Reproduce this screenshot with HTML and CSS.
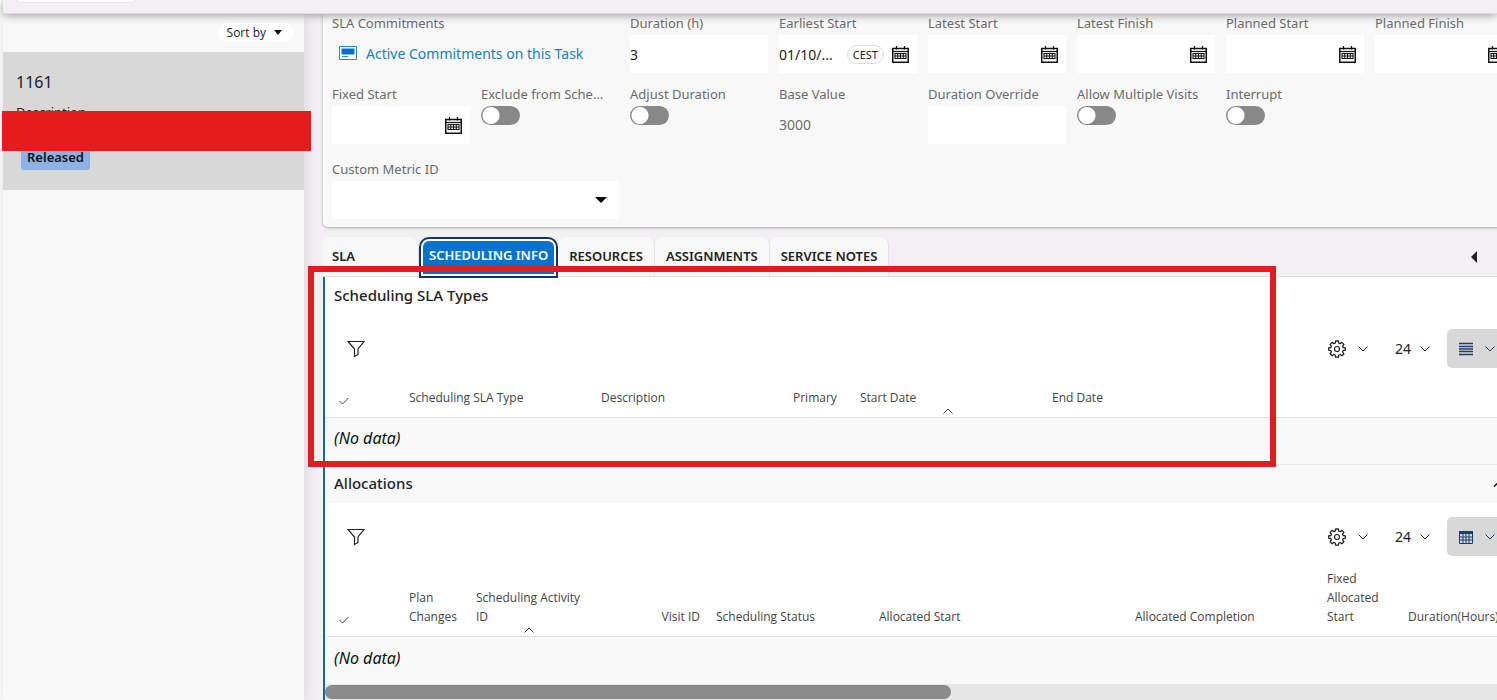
FILE: index.html
```html
<!DOCTYPE html>
<html lang="en">

<head>
  <meta charset="UTF-8" />
  <meta name="viewport" content="width=device-width, initial-scale=1" />
  <title>Task 1161</title>
  <link rel="stylesheet" href="styles.css">
</head>

<body>

  <!-- Shared icons -->
  <svg class="sprite" aria-hidden="true">
    <symbol id="i-calendar" viewBox="0 0 17 17">
      <path d="M.75 2.5h15.5v13.75H.75z" fill="#fff" stroke="#111" stroke-width="1.5" />
      <path d="M1 5.5h15" stroke="#111" stroke-width="1.2" />
      <path d="M4.5 0v3.5M12.500 0v3.500" stroke="#111" stroke-width="1.3" />
      <path d="M3 7.500h11v5H3zM3 10h11M5.750 7.500v5M8.500 7.500v5M11.250 7.500v5" fill="none" stroke="#111" stroke-width="1.1" />
    </symbol>
    <symbol id="i-filter" viewBox="0 0 18 18">
      <path d="M1 1.500h16l-6 7.500v5.500l-3.500 2V9z" fill="none" stroke="#222" stroke-width="1.2" />
    </symbol>
    <symbol id="i-check" viewBox="0 0 10 8">
      <path d="M.5 4l3 3 6-6" fill="none" stroke="#444" />
    </symbol>
    <symbol id="i-down" viewBox="0 0 10 6">
      <path d="M.5.5L5 5 9.500.5" fill="none" stroke="currentColor" />
    </symbol>
    <symbol id="i-up" viewBox="0 0 10 6">
      <path d="M.5 5.500L5 1l4.500 4.500" fill="none" stroke="currentColor" />
    </symbol>
    <symbol id="i-gear" viewBox="0 0 18 18">
      <path d="M7.600 1h2.800l.4 2.200 1.300.5 1.800-1.300 2 2-1.300 1.800.5 1.300 2.200.4v2.200l-2.200.6-.5 1.200 1.300 1.900-2 2-1.800-1.300-1.300.5-.4 2.200H7.600l-.4-2.200-1.300-.5-1.800 1.300-2-2 1.300-1.900-.5-1.200-2.200-.6V7.900l2.200-.4.5-1.300-1.300-1.800 2-2 1.800 1.300 1.300-.5z" fill="none" stroke="#222" stroke-width="1.300" stroke-linejoin="round" />
      <circle cx="9" cy="9" r="2.500" fill="none" stroke="#222" stroke-width="1.200" />
    </symbol>
  </svg>

  <header class="topbar">
    <div class="topbar-box"></div>
  </header>

  <div class="layout">
    <aside class="sidebar">
      <div class="sort">
        <button class="sort-btn" type="button">Sort by
          <svg width="8" height="5" viewBox="0 0 8 5"><path d="M0 0h8L4 5z" fill="#111" /></svg>
        </button>
      </div>
      <div class="card">
        <h2>1161</h2>
        <p>Description</p>
        <span class="status">Released</span>
      </div>
    </aside>

    <main class="content">
      <section class="panel">
        <div class="field span-2">
          <span class="label">SLA Commitments</span>
          <a class="commit-link" href="#">
            <svg width="18" height="14" viewBox="0 0 18 14">
              <path d="M.5.5h17v13H.5z" fill="#fff" stroke="#2a86c8" />
              <path d="M2.500 2.500h13v6h-13z" fill="#0a6ed1" />
              <path d="M3 10.500h6" stroke="#2a86c8" />
            </svg>
            Active Commitments on this Task
          </a>
        </div>
        <div class="field">
          <label for="duration">Duration (h)</label>
          <div class="box"><input id="duration" type="text" value="3" /></div>
        </div>
        <div class="field">
          <label for="earliestStart">Earliest Start</label>
          <div class="box">
            <input id="earliestStart" type="text" value="01/10/..." />
            <span class="zone">CEST</span>
            <svg class="cal"><use href="#i-calendar" /></svg>
          </div>
        </div>
        <div class="field">
          <label for="latestStart">Latest Start</label>
          <div class="box"><input id="latestStart" type="text" /><svg class="cal"><use href="#i-calendar" /></svg></div>
        </div>
        <div class="field">
          <label for="latestFinish">Latest Finish</label>
          <div class="box"><input id="latestFinish" type="text" /><svg class="cal"><use href="#i-calendar" /></svg></div>
        </div>
        <div class="field">
          <label for="plannedStart">Planned Start</label>
          <div class="box"><input id="plannedStart" type="text" /><svg class="cal"><use href="#i-calendar" /></svg></div>
        </div>
        <div class="field">
          <label for="plannedFinish">Planned Finish</label>
          <div class="box"><input id="plannedFinish" type="text" /><svg class="cal"><use href="#i-calendar" /></svg></div>
        </div>

        <div class="field">
          <label for="fixedStart">Fixed Start</label>
          <div class="box"><input id="fixedStart" type="text" /><svg class="cal"><use href="#i-calendar" /></svg></div>
        </div>
        <div class="field">
          <label for="exclude">Exclude from Sche...</label>
          <input id="exclude" class="toggle" type="checkbox" />
        </div>
        <div class="field">
          <label for="adjust">Adjust Duration</label>
          <input id="adjust" class="toggle" type="checkbox" />
        </div>
        <div class="field">
          <span class="label">Base Value</span>
          <div class="readonly">3000</div>
        </div>
        <div class="field">
          <label for="override">Duration Override</label>
          <div class="box"><input id="override" type="text" /></div>
        </div>
        <div class="field">
          <label for="visits">Allow Multiple Visits</label>
          <input id="visits" class="toggle" type="checkbox" />
        </div>
        <div class="field">
          <label for="interrupt">Interrupt</label>
          <input id="interrupt" class="toggle" type="checkbox" />
        </div>

        <div class="field span-2 metric">
          <label for="metric">Custom Metric ID</label>
          <div class="box">
            <select id="metric"><option></option></select>
            <svg class="caret" width="12" height="6" viewBox="0 0 12 6"><path d="M0 0h12L6 6z" /></svg>
          </div>
        </div>
      </section>

      <nav class="tabs">
        <button class="tab tab-sla" type="button">SLA</button>
        <button class="tab active" type="button">SCHEDULING INFO</button>
        <button class="tab" type="button">RESOURCES</button>
        <button class="tab" type="button">ASSIGNMENTS</button>
        <button class="tab" type="button">SERVICE NOTES</button>
        <button class="tab-prev" type="button" aria-label="Previous tabs">
          <svg width="6" height="12" viewBox="0 0 6 12"><path d="M6 0v12L0 6z" fill="#222" /></svg>
        </button>
      </nav>

      <div class="pane">
        <section>
          <div class="title"><h3>Scheduling SLA Types</h3></div>
          <div class="toolbar">
            <button class="tool filter" type="button" aria-label="Filter"><svg width="18" height="18"><use href="#i-filter" /></svg></button>
            <button class="tool" type="button" aria-label="Settings">
              <svg width="18" height="18"><use href="#i-gear" /></svg>
              <svg width="10" height="6"><use href="#i-down" /></svg>
            </button>
            <button class="tool count" type="button">24 <svg width="10" height="6"><use href="#i-down" /></svg></button>
            <button class="tool view" type="button" aria-label="List view">
              <svg width="14" height="14" viewBox="0 0 14 14"><path d="M0 1.500h14M0 4.500h14M0 7h14M0 9.500h14M0 12.500h14" stroke="#1c3c74" stroke-width="1.300" /></svg>
              <svg width="10" height="6"><use href="#i-down" /></svg>
            </button>
          </div>
          <table>
            <colgroup>
              <col class="w-check"><col class="w-192"><col class="w-192"><col class="w-67"><col class="w-192"><col>
            </colgroup>
            <thead>
              <tr>
                <th class="check"><svg width="10" height="8"><use href="#i-check" /></svg></th>
                <th>Scheduling SLA Type</th>
                <th>Description</th>
                <th>Primary</th>
                <th class="sorted">Start Date<svg width="10" height="6"><use href="#i-up" /></svg></th>
                <th>End Date</th>
              </tr>
            </thead>
            <tbody>
              <tr><td colspan="6">(No data)</td></tr>
            </tbody>
          </table>
        </section>

        <section>
          <div class="title shaded">
            <h3>Allocations</h3>
            <svg width="14" height="7" viewBox="0 0 14 7"><path d="M1 6.500L7 1l6 5.500" fill="none" stroke="#111" stroke-width="1.500" /></svg>
          </div>
          <div class="toolbar">
            <button class="tool filter" type="button" aria-label="Filter"><svg width="18" height="18"><use href="#i-filter" /></svg></button>
            <button class="tool" type="button" aria-label="Settings">
              <svg width="18" height="18"><use href="#i-gear" /></svg>
              <svg width="10" height="6"><use href="#i-down" /></svg>
            </button>
            <button class="tool count" type="button">24 <svg width="10" height="6"><use href="#i-down" /></svg></button>
            <button class="tool view" type="button" aria-label="Table view">
              <svg width="14" height="14" viewBox="0 0 14 14"><path d="M.5 1.500h13v12H.5zM.5 7h13M.5 10h13M4 3v10.500M7 3v10.500M10 3v10.500" fill="none" stroke="#1c3c74" /><path d="M0 1h14v3H0z" fill="#1c3c74" /></svg>
              <svg width="10" height="6"><use href="#i-down" /></svg>
            </button>
          </div>
          <table>
            <colgroup>
              <col class="w-check"><col class="w-67"><col class="w-activity"><col class="w-visit"><col class="w-status"><col class="w-start"><col class="w-192"><col class="w-fixed"><col>
            </colgroup>
            <thead>
              <tr>
                <th class="check"><svg width="10" height="8"><use href="#i-check" /></svg></th>
                <th>Plan Changes</th>
                <th class="sorted">Scheduling Activity ID<svg width="10" height="6"><use href="#i-up" /></svg></th>
                <th class="right">Visit ID</th>
                <th>Scheduling Status</th>
                <th>Allocated Start</th>
                <th>Allocated Completion</th>
                <th>Fixed Allocated Start</th>
                <th>Duration(Hours)</th>
              </tr>
            </thead>
            <tbody>
              <tr><td colspan="9">(No data)</td></tr>
            </tbody>
          </table>
          <div class="scroll"><div class="thumb"></div></div>
        </section>
      </div>
    </main>
  </div>

  <!-- Highlights drawn over the page -->
  <div class="mark-bar"></div>
  <div class="mark-frame"></div>

</body>

</html>
```
FILE: styles.css
```css
* {
  box-sizing: border-box;
}

body {
  margin: 0;
  padding-left: 3px;
  height: 100vh;
  overflow: hidden;
  position: relative;
  display: flex;
  flex-direction: column;
  background-color: #fff;
  color: #222;
  font-family: "Noto Sans", "Open Sans", sans-serif;
  font-size: 13px;
  line-height: 19px;
}

h2,
h3,
p {
  margin: 0;
}

button,
input,
select {
  font: inherit;
  color: inherit;
  border: none;
  background: none;
  padding: 0;
  margin: 0;
}

svg {
  display: block;
  flex: none;
}

.sprite {
  position: absolute;
  width: 0;
  height: 0;
}

.topbar {
  flex: none;
  height: 14px;
  padding-left: 14px;
  background-color: #f2f0f3;
  border-bottom: 1px solid #dcdadd;
  box-shadow: 0 1px 10px rgba(0, 0, 0, 0.4);
  position: relative;
  z-index: 1;
}

.topbar-box {
  width: 118px;
  height: 3px;
  background-color: #fff;
  border: 1px solid #e6e4e7;
  border-top: none;
  border-radius: 0 0 4px 4px;
}

.layout {
  flex: 1;
  display: flex;
  min-height: 0;
  background-color: #f2f0f3;
}

/* Sidebar */
.sidebar {
  flex: none;
  width: 301px;
  background-color: #f8f8f8;
  box-shadow: 0 4px 14px rgba(0, 0, 0, 0.13);
}

.sort {
  display: flex;
  justify-content: flex-end;
  padding: 9px 10px 10px;
}

.sort-btn {
  display: flex;
  align-items: center;
  gap: 8px;
  padding: 0 12px 0 9px;
  border-radius: 10px;
  background-color: #fff;
  font-family: "Open Sans", sans-serif;
  font-size: 12px;
}

.card {
  height: 138px;
  padding: 18px 13px;
  background-color: #d8d8d8;
}

.card h2 {
  font-size: 16px;
  font-weight: 400;
  line-height: 24px;
}

.card p {
  margin-top: 9px;
}

.status {
  display: inline-block;
  margin: 26px 0 0 5px;
  padding: 0 6px 3px;
  border-radius: 3px;
  background-color: #8fb1e5;
  color: #111;
  font-weight: 600;
}

/* Task fields */
.content {
  flex: 1 0 1203px;
  min-width: 0;
  margin-left: 18px;
}

.panel {
  display: grid;
  grid-template-columns: repeat(8, minmax(0, 1fr));
  gap: 12px 11px;
  margin-left: 1px;
  padding: 0 12px 8px 9px;
  background-color: #f8f8f8;
  border-bottom-left-radius: 5px;
  box-shadow: 0 1px 3px rgba(0, 0, 0, 0.3);
}

.span-2 {
  grid-column: span 2;
}

.field label,
.label {
  display: block;
  margin-bottom: 2px;
  color: #6b6b6b;
  white-space: nowrap;
}

.box {
  display: flex;
  align-items: center;
  position: relative;
  height: 38px;
  background-color: #fff;
}

.box input,
.box select {
  flex: 1;
  min-width: 0;
  height: 100%;
  font-size: 14px;
  appearance: none;
}

.cal {
  width: 17px;
  height: 17px;
  margin: 0 8px;
}

.zone {
  padding: 0 5px;
  border: 1px solid #ddd;
  border-radius: 10px;
  font-size: 11px;
  line-height: 17px;
}

.readonly {
  color: #6b6b6b;
  font-size: 14px;
  line-height: 38px;
}

.commit-link {
  display: flex;
  align-items: center;
  gap: 9px;
  height: 36px;
  padding-left: 7px;
  color: #1580bb;
  font-size: 14px;
  text-decoration: none;
}

.toggle {
  display: block;
  appearance: none;
  width: 39px;
  height: 19px;
  border-radius: 10px;
  background: radial-gradient(circle at 10px 50%, #fff 8px, #888 9px);
}

.metric {
  margin-top: 4px;
}

.caret {
  position: absolute;
  right: 12px;
}

/* Tabs */
.tabs {
  display: flex;
  align-items: stretch;
  height: 50px;
  padding: 10px 48px 0 1px;
  border-bottom: 1px solid #dfdde0;
}

.tab {
  padding: 0 11px;
  border-right: 1px solid #e4e2e5;
  border-radius: 8px 8px 0 0;
  background-color: #f8f8f8;
  font-weight: 600;
}

.tab-sla {
  width: 96px;
  padding: 0 9px;
  text-align: left;
}

.tab.active {
  margin: 2px 2px 0;
  padding: 0 6px 4px;
  border: 2px solid #fff;
  outline: 2px solid #17345e;
  background-color: #0572ce;
  color: #fff;
}

.tab-prev {
  margin-left: auto;
}

/* Tables */
.pane {
  margin-left: 1px;
  border-left: 2px solid #0f6a9b;
  background-color: #fff;
}

.title {
  display: flex;
  align-items: center;
  justify-content: space-between;
  height: 38px;
  padding: 0 18px 2px 9px;
}

.title.shaded {
  height: 39px;
  background-color: #f8f8f8;
  border-top: 1px solid #e8e8e8;
}

.title h3 {
  font-size: 15px;
  font-weight: 500;
}

.toolbar {
  display: flex;
  padding: 14px 20px 13px 12px;
}

.tool {
  display: flex;
  align-items: center;
  gap: 12px;
  height: 39px;
  padding: 0 10px;
}

.filter {
  margin-right: auto;
}

.count {
  gap: 9px;
  padding: 0 17px;
  font-size: 14px;
}

.view {
  padding: 0 10px 0 12px;
  border-radius: 5px;
  background-color: #d8d8d8;
  color: #1c3c74;
}

table {
  width: 100%;
  table-layout: fixed;
  border-collapse: collapse;
}

th {
  position: relative;
  height: 36px;
  padding: 0 8px 10px;
  border-bottom: 1px solid #e0e0e0;
  color: #444;
  font-family: "Open Sans", sans-serif;
  font-size: 12px;
  font-weight: 400;
  text-align: left;
  vertical-align: bottom;
}

th.right {
  text-align: right;
}

th.check {
  padding: 0 14px 12px;
}

.sorted svg {
  position: absolute;
  left: 50%;
  bottom: 3px;
  margin-left: -5px;
}

td {
  height: 47px;
  padding: 0 9px 4px;
  background-color: #f8f8f8;
  color: #111;
  font-size: 16px;
  font-style: italic;
}

.w-check { width: 76px; }
.w-67 { width: 67px; }
.w-192 { width: 192px; }
.w-activity { width: 122px; }
.w-visit { width: 118px; }
.w-status { width: 163px; }
.w-start { width: 256px; }
.w-fixed { width: 81px; }

.scroll {
  height: 16px;
  padding: 1px 0;
  background-color: #e6e6e6;
}

.thumb {
  width: 626px;
  height: 14px;
  border-radius: 7px;
  background-color: #8a8a8a;
}

/* Highlights */
.mark-bar {
  position: absolute;
  z-index: 2;
  left: 2px;
  top: 111px;
  width: 309px;
  height: 40px;
  background-color: #e61c1c;
}

.mark-frame {
  position: absolute;
  z-index: 2;
  left: 308px;
  top: 266px;
  width: 968px;
  height: 201px;
  border: 6px solid #e01e20;
}
```
